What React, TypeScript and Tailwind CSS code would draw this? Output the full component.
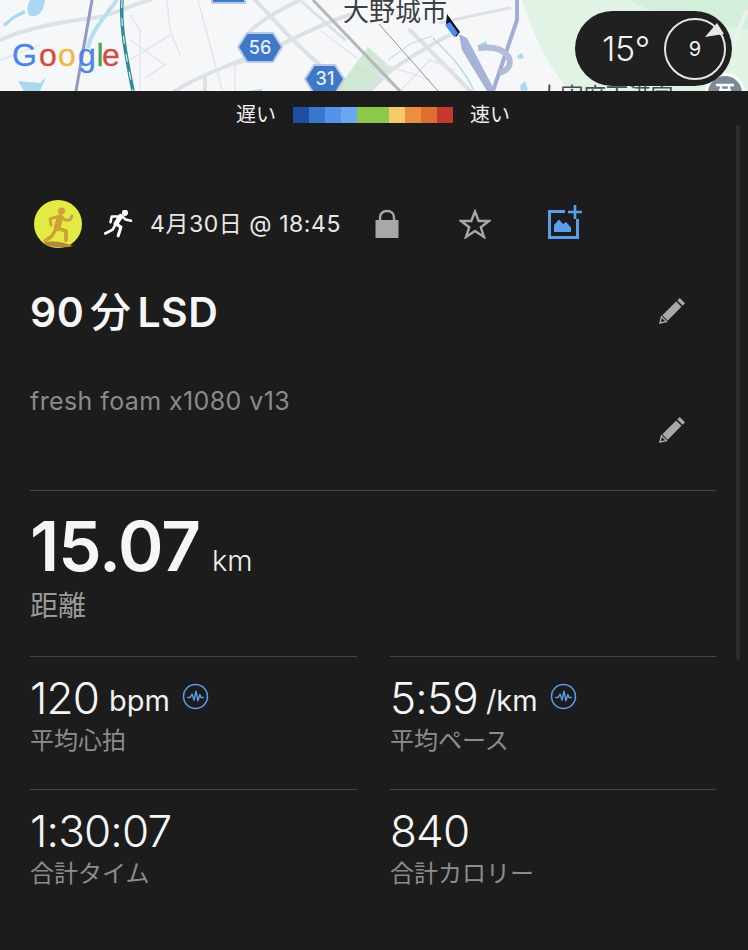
import React from "react";

const FONT = "font-['Inter','Noto_Sans_CJK_JP',sans-serif]";

function MapArt() {
  return (
    <svg viewBox="0 0 748 91" width="748" height="91" className="block" fontFamily="'Noto Sans CJK JP', sans-serif">
      <rect width="748" height="91" fill="#f6f7f9" />
      {/* green areas */}
      <path d="M522 0H748V91H570C550 70 535 40 522 0Z" fill="#e0f3e5" />
      <path d="M630 0H748V30L690 20C665 15 645 10 630 0Z" fill="#d3eeda" />
      <path d="M747 10L722 70" fill="none" stroke="#eef0f2" strokeWidth="4" />
      <path d="M336 91L368 47L394 70L372 91Z" fill="#cfe8d1" />
      {/* water */}
      <path d="M30 0H45C44 12 38 17 30 16C26 12 27 5 30 0Z" fill="#a8d9f0" />
      <path d="M3 24L13 16L24 10L26 13L14 19L5 27Z" fill="#a8d9f0" />
      <path d="M18 81L40 83L46 77L40 91H24Z" fill="#a8d9f0" />
      <path d="M248 91L262 89V91Z" fill="#a8d9f0" />
      <path d="M480 44L486 41L488 47H482Z" fill="#a8d9f0" />
      <path d="M517 56L522 53L524 58L519 59Z" fill="#a8d9f0" />
      <path d="M520 86L525 81L528 90L521 91Z" fill="#a8d9f0" />
      {/* wide roads */}
      <g fill="none" stroke="#dde1e6" strokeLinecap="round">
        <path d="M0 40C30 27 60 22 100 17C110 16 130 5 150 0" strokeWidth="4" />
        <path d="M175 91C200 75 235 63 280 45C310 30 340 18 352 14" strokeWidth="4" />
        <path d="M255 0C275 20 290 40 320 65" strokeWidth="4" />
        <path d="M250 31C268 15 285 8 300 0" strokeWidth="4" />
        <path d="M300 0L345 40" strokeWidth="3" />
        <path d="M410 30L470 91" strokeWidth="4" />
        <path d="M360 91C385 75 410 55 450 35" strokeWidth="4" />
        <path d="M440 23C470 16 490 12 510 8" strokeWidth="3" />
        <path d="M205 91V78" strokeWidth="4" />
      </g>
      <g fill="none" stroke="#e3e6ea" strokeWidth="1.5">
        <path d="M130 40L165 65L145 78" />
        <path d="M130 60L170 35" />
        <path d="M167 0L170 30L180 55" />
        <path d="M198 0L222 90" />
        <path d="M130 15L140 30V91" />
        <path d="M235 91V65L260 58" />
        <path d="M372 60L430 80" />
        <path d="M400 91L430 60L455 70" />
        <path d="M320 30L400 91" />
        <path d="M0 60L40 45" />
      </g>
      {/* rail */}
      <path d="M313 0L400 91" fill="none" stroke="#b5b7ba" strokeWidth="3" />
      <path d="M379 24L438 91" fill="none" stroke="#666a70" strokeWidth="0.7" />
      {/* expressway blue-grey */}
      <path d="M92 0L76 91" fill="none" stroke="#8e9bc4" strokeWidth="3" />
      <path d="M117 0C100 22 90 35 88 48" fill="none" stroke="#b6e0ec" strokeWidth="4" />
      <path d="M122 0C120 30 128 65 133 91" fill="none" stroke="#2f8c96" strokeWidth="3.5" />
      <path d="M122 0C120 30 128 65 133 91" fill="none" stroke="#fff" strokeWidth="1" strokeDasharray="8 10" />
      <path d="M517 0V20L493 91" fill="none" stroke="#a0add4" strokeWidth="4" />
      <path d="M459 34L467 38L495 91H487L462 50Z" fill="#a6b3d6" />
      <path d="M478 48C495 46 505 50 509 58C512 66 506 71 500 73" fill="none" stroke="#b0bcd8" strokeWidth="6" />
      {/* light blue stream */}
      <path d="M433 38C450 55 465 70 474 91" fill="none" stroke="#a8dcea" strokeWidth="1.2" />
      <path d="M388 60L410 44L432 36" fill="none" stroke="#b8e2ec" strokeWidth="1.2" />
      {/* route */}
      <path d="M447 14L460 32L456 37L446 24Z" fill="#0d1220" />
      <path d="M445 25L450 22L458 33L454 37Z" fill="#4a90e8" />
      {/* labels */}
      <text x="343" y="21" fontSize="26" fill="#3c3f44" stroke="#fff" strokeWidth="0.4" paintOrder="stroke">大野城市</text>
      <text x="538" y="104" fontSize="23" fill="#4a4d52" letterSpacing="-0.5">太宰府天満宮</text>
      {/* shields */}
      <path d="M238 47L247 33H273L282 47L273 62H247Z" fill="#3f78c9" stroke="#b9c9e6" strokeWidth="2" strokeLinejoin="round" />
      <text x="260" y="54" fontSize="18" fontWeight="500" fill="#e8eef8" textAnchor="middle" fontFamily="Inter, sans-serif">56</text>
      <path d="M305 79L314 65H335L344 79L335 94H314Z" fill="#3f78c9" stroke="#b9c9e6" strokeWidth="2" strokeLinejoin="round" />
      <text x="325" y="85" fontSize="18" fontWeight="500" fill="#e8eef8" textAnchor="middle" fontFamily="Inter, sans-serif">31</text>
      <path d="M212 -5H245V3H212Z" fill="#3f78c9" stroke="#b9c9e6" strokeWidth="2" />
      {/* google logo */}
      <g fontFamily="'Liberation Sans', sans-serif" fontSize="32" strokeWidth="0.3">
        <text x="12" y="66" fill="#4a85e8" stroke="#4a85e8">G</text>
        <text x="39" y="66" fill="#d44a3c" stroke="#d44a3c">o</text>
        <text x="58" y="66" fill="#eeb93c" stroke="#eeb93c">o</text>
        <text x="78" y="66" fill="#4a85e8" stroke="#4a85e8">g</text>
        <text x="96.5" y="66" fill="#3fa35a" stroke="#3fa35a">l</text>
        <text x="102" y="66" fill="#d44a3c" stroke="#d44a3c">e</text>
      </g>
      {/* POI */}
      <circle cx="725" cy="93" r="20" fill="#fff" />
      <circle cx="725" cy="93" r="17" fill="#7b8a99" />
      <path d="M716 85H734M719 90H731M721 85V91M729 85V91" stroke="#fff" strokeWidth="2.4" />
    </svg>
  );
}

function Runner({ className = "" }: { className?: string }) {
  return (
    <svg viewBox="0 0 30 30" className={className}>
      <circle cx="21.7" cy="2.9" r="3.2" fill="#fff" />
      <g fill="none" stroke="#fff" strokeLinejoin="round" strokeLinecap="round">
        <path d="M6.7 12.7L8 6.7H19L22.3 9.8L28 11.2" strokeWidth="2.6" />
        <path d="M17.3 6.5L12.3 14.3" strokeWidth="5" />
        <path d="M12.3 14.3L9 20.3L1.3 24.3" strokeWidth="2.8" />
        <path d="M12.3 14.3L17.5 17.7L14.7 26.7" strokeWidth="3.2" />
      </g>
    </svg>
  );
}

function AvatarArt() {
  return (
    <svg viewBox="0 0 48 48" className="w-[48px] h-[48px] block">
      <circle cx="24" cy="24" r="24" fill="#e3ea44" />
      <path d="M9 43C18 40 30 42 39 46C34 48 14 48 9 43Z" fill="#b5893a" />
      <circle cx="27.5" cy="11" r="3.5" fill="#cfa03a" />
      <g fill="none" stroke="#cfa03a" strokeLinejoin="round" strokeLinecap="round">
        <path d="M17 25L16 19L22 17H28L31 20L36 20L38 16" strokeWidth="2.8" />
        <path d="M26 17.5L23 28" strokeWidth="6.5" />
        <path d="M22.5 28L18 36L11 41" strokeWidth="3.4" />
        <path d="M23 28L32 31L32 40" strokeWidth="3.8" />
      </g>
    </svg>
  );
}

function Pencil({ className = "" }: { className?: string }) {
  return (
    <svg viewBox="0 0 28 28" className={className}>
      <path d="M21.5 1L27 6.5L24.5 9L19 3.5Z M17.8 4.7L23.3 10.2L9 24.5L3.5 19Z" fill="#a8a8a8" />
      <path d="M2.6 20.5L7.6 25.5L1 27Z" fill="none" stroke="#a8a8a8" strokeWidth="1.5" />
    </svg>
  );
}

function Pulse() {
  return (
    <svg viewBox="0 0 28 28" className="w-[27px] h-[27px] shrink-0 block">
      <circle cx="14" cy="14" r="12.4" fill="none" stroke="#5b9be6" strokeWidth="1.6" />
      <path d="M6 15H8.5L10.5 11.5L12.5 18L14.5 8.5L16.5 18.5L18.5 12L19.7 15H22" fill="none" stroke="#5b9be6" strokeWidth="1.5" strokeLinejoin="round" strokeLinecap="round" />
    </svg>
  );
}

function Stat({ value, unit, label, pulse, unitGap }: { value: string; unit?: string; label: string; pulse?: boolean; unitGap?: string }) {
  return (
    <div className="border-t border-[#454545] h-[133px] pt-[16px]">
      <div className="flex items-center h-[50px]">
        <span className="text-[44px] leading-[50px] font-light text-[#f6f6f6] tracking-[-0.8px]">{value}</span>
        {unit && <span className={`text-[29px] leading-[50px] text-[#f0f0f0] mt-[6px] ${unitGap}`}>{unit}</span>}
        {pulse && <span className="ml-[12px] -mt-[3px]"><Pulse /></span>}
      </div>
      <div className="text-[24px] leading-[34px] text-[#8c8c8c] mt-[1px]">{label}</div>
    </div>
  );
}

export default function App() {
  const colors = ["#1f4fa3", "#3878d0", "#5394e8", "#6ba6f2", "#8cc84b", "#8cc84b", "#f2cc66", "#ea8f3f", "#df6f30", "#c9362b"];
  return (
    <div className={`${FONT} relative w-[748px] h-[950px] overflow-hidden bg-[#1c1c1c]`}>
      <div className="relative h-[91px] overflow-hidden">
        <MapArt />
        <div className="absolute left-[575px] top-[11px] w-[157px] h-[75px] rounded-full bg-[#202020] flex items-center pl-[27px]">
          <span className="text-[34px] leading-none text-[#f2f2f2] tracking-[-0.4px] font-light">15°</span>
          <div className="relative ml-[14px] w-[62px] h-[62px] rounded-full border-2 border-[#e6e6e6] flex items-center justify-center">
            <span className="text-[20px] text-[#f2f2f2]">9</span>
            <svg viewBox="0 0 62 62" className="absolute -left-[2px] -top-[2px] w-[62px] h-[62px]">
              <path d="M41 19L53 5L60 16Z" fill="#e8e8e8" />
            </svg>
          </div>
        </div>
      </div>

      <div className="flex items-center justify-center h-[47px] pr-[2px]">
        <span className="text-[20px] leading-none text-[#ededed] w-[40px] whitespace-nowrap">遅い</span>
        <div className="flex h-[16px] mx-[17px]">
          {colors.map((c, i) => (
            <div key={i} className="w-[16px] h-full" style={{ backgroundColor: c }} />
          ))}
        </div>
        <span className="text-[20px] leading-none text-[#ededed] w-[40px] whitespace-nowrap">速い</span>
      </div>

      <div className="pl-[30px] pr-[32px]">
        <div className="flex items-center h-[48px] mt-[62px] pl-[4px]">
          <div className="shrink-0">
            <AvatarArt />
          </div>
          <Runner className="ml-[22px] w-[29px] h-[29px] shrink-0" />
          <span className="ml-[17px] text-[23px] leading-none text-[#e8e8e8] whitespace-nowrap w-[192px] tracking-[0.55px]">4月30日 @ 18:45</span>
          <svg viewBox="0 0 24 30" className="ml-[33px] w-[24px] h-[30px] shrink-0">
            <path d="M5 14V8.5C5 4.5 8 2 12 2C16 2 19 4.5 19 8.5V14" fill="none" stroke="#a8a8a8" strokeWidth="2.4" />
            <rect x="0.5" y="11" width="23" height="18" fill="#a8a8a8" />
          </svg>
          <svg viewBox="0 0 32 30" className="ml-[60px] w-[32px] h-[30px] shrink-0">
            <path d="M16 2.5L19.7 12H30L21.8 18.3L25 28L16 22L7 28L10.2 18.3L2 12H12.3Z" fill="none" stroke="#a8a8a8" strokeWidth="2.4" />
          </svg>
          <svg viewBox="0 0 36 36" className="ml-[56px] w-[36px] h-[36px] shrink-0 -mt-[4px]">
            <path d="M18 7.5H2.5V33.5H30.5V15" fill="none" stroke="#5b9ef0" strokeWidth="3" />
            <path d="M28 1V15M21 8H35" fill="none" stroke="#5b9ef0" strokeWidth="2.6" />
            <path d="M7 28V21L12 15.5L16 20L19 18L24 23.5V28Z" fill="#5b9ef0" />
          </svg>
        </div>

        <div className="flex items-center justify-between h-[48px] mt-[40px] pr-[30px]">
          <span className="flex items-center text-[41px] leading-none font-semibold text-[#f6f6f6] whitespace-nowrap tracking-[0.4px]">
            <span>90</span>
            <span className="mx-[6px] font-medium">分</span>
            <span>LSD</span>
          </span>
          <Pencil className="w-[27px] h-[27px] mb-[3px]" />
        </div>

        <div className="text-[25px] leading-[30px] text-[#8a8a8a] mt-[50px] tracking-[0.4px]">fresh foam x1080 v13</div>
        <div className="flex justify-end pr-[30px]">
          <Pencil className="w-[27px] h-[27px]" />
        </div>

        <div className="border-t border-[#454545] mt-[47px] pt-[15px]">
          <div className="flex items-baseline h-[80px]">
            <span className="text-[69px] leading-[80px] font-semibold text-[#f6f6f6] tracking-[-1px]">15.07</span>
            <span className="ml-[12px] text-[29px] text-[#f0f0f0] font-light">km</span>
          </div>
          <div className="text-[28px] leading-[36px] text-[#9a9a9a] mt-[2px]">距離</div>
        </div>

        <div className="grid grid-cols-[327px_326px] gap-x-[33px] mt-[32px]">
          <Stat value="120" unit="bpm" label="平均心拍" pulse unitGap="ml-[10px]" />
          <Stat value="5:59" unit="/km" label="平均ペース" pulse unitGap="ml-[8px]" />
          <Stat value="1:30:07" label="合計タイム" />
          <Stat value="840" label="合計カロリー" />
        </div>
      </div>

      <div className="absolute left-[736px] top-[125px] w-[4px] h-[535px] rounded-full bg-[#2e2e2e]" />
    </div>
  );
}
